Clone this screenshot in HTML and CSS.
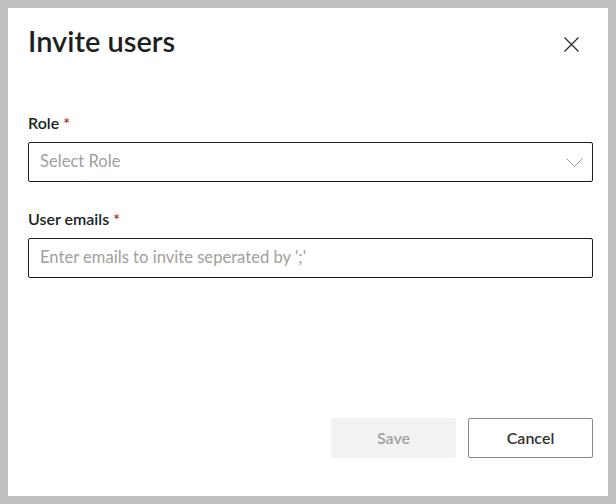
FILE: index.html
```
<!DOCTYPE html>
<html>
<head>
<meta charset="utf-8">
<link rel="stylesheet" href="styles.css">
</head>
<body>
<div class="dialog">
  <div class="header">
    <h1 class="title">Invite users</h1>
    <button class="close" aria-label="Close">
      <svg width="15" height="15" viewBox="0 0 15 15"><path d="M0.5 0.5 L14.5 14.5 M14.5 0.5 L0.5 14.5" stroke="#201f1e" stroke-width="1.1" fill="none"/></svg>
    </button>
  </div>
  <div class="field field-first">
    <label class="label">Role <span class="req">*</span></label>
    <div class="box">
      <span class="placeholder">Select Role</span>
      <svg class="chev" width="17" height="9" viewBox="0 0 17 9"><path d="M0.5 0.5 L8.5 8.5 L16.5 0.5" stroke="#a19f9d" stroke-width="1" fill="none"/></svg>
    </div>
  </div>
  <div class="field">
    <label class="label">User emails <span class="req">*</span></label>
    <div class="box">
      <span class="placeholder">Enter emails to invite seperated by ';'</span>
    </div>
  </div>
  <div class="footer">
    <button class="btn btn-save">Save</button>
    <button class="btn btn-cancel">Cancel</button>
  </div>
</div>
</body>
</html>
```
FILE: styles.css
```
html, body {
  margin: 0;
  padding: 0;
}
body {
  background: #c0c0c0;
  padding: 8px;
  font-family: "Lato", "Open Sans", sans-serif;
  color: #201f1e;
}
.dialog {
  background: #fff;
  width: 600px;
  height: 488px;
  box-sizing: border-box;
  padding: 15px 15px 38px 20px;
  display: flex;
  flex-direction: column;
}
.header {
  display: flex;
  justify-content: space-between;
  align-items: flex-start;
}
.title {
  margin: 0;
  font-size: 29px;
  line-height: 36px;
  font-weight: 600;
  color: #201f1e;
}
.close {
  border: 0;
  background: none;
  padding: 0;
  margin: 14px 14px 0 0;
  width: 15px;
  height: 15px;
  display: flex;
}
.field {
  display: flex;
  flex-direction: column;
  margin-top: 26px;
}
.field-first {
  margin-top: 53px;
}
.label {
  font-size: 16px;
  line-height: 22px;
  font-weight: 600;
  color: #201f1e;
  margin-bottom: 8px;
}
.req {
  color: #a4262c;
}
.box {
  height: 40px;
  box-sizing: border-box;
  border: 1px solid #201f1e;
  border-radius: 2px;
  padding: 0 9px 2px 11px;
  display: flex;
  align-items: center;
  justify-content: space-between;
}
.chev {
  margin-top: 2px;
}
.placeholder {
  font-size: 16.6px;
  color: #a19f9d;
}
.footer {
  margin-top: auto;
  display: flex;
  justify-content: flex-end;
  gap: 12px;
}
.btn {
  width: 125px;
  height: 40px;
  border-radius: 2px;
  font-family: inherit;
  font-size: 16px;
  font-weight: 600;
  padding: 0 0 2px;
}
.btn-save {
  background: #f3f2f1;
  border: 0;
  color: #a19f9d;
}
.btn-cancel {
  background: #fff;
  border: 1px solid #8a8886;
  color: #323130;
}
```
